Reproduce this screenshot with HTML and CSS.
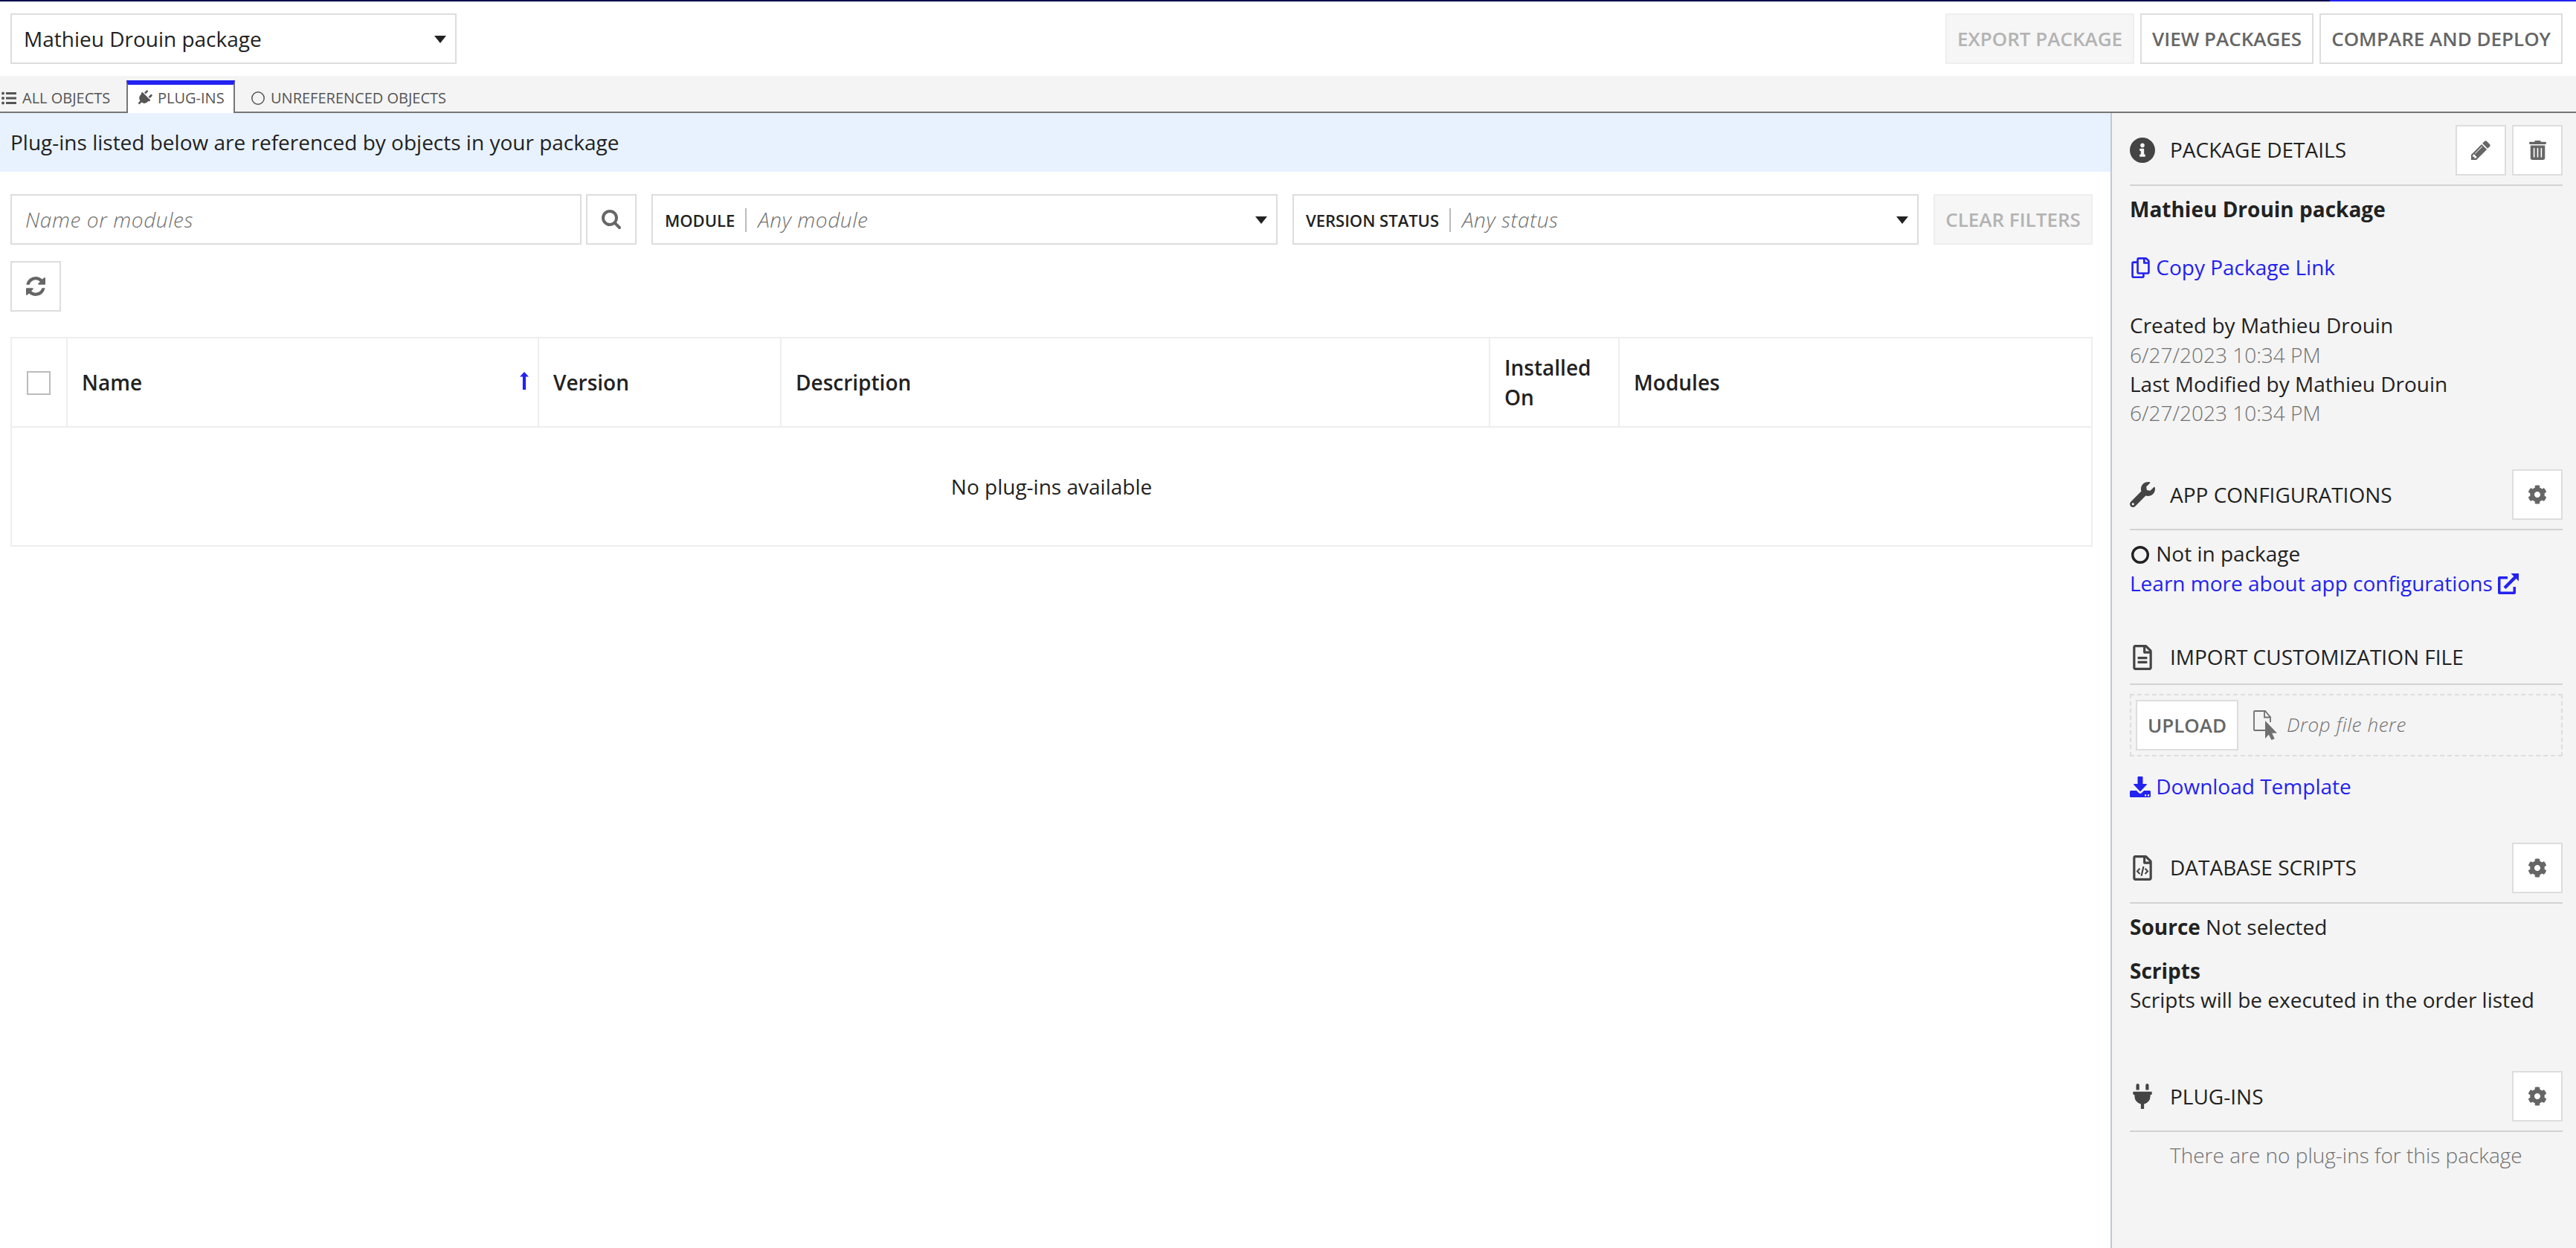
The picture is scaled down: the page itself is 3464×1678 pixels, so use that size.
FILE: index.html
```html
<!DOCTYPE html>
<html lang="en">
<head>
  <meta charset="UTF-8">
  <meta name="viewport" content="width=device-width, initial-scale=1.0">
  <title>Mathieu Drouin package</title>
  <link rel="stylesheet" href="styles.css">
</head>
<body>
  <svg class="sprite" aria-hidden="true">
    <symbol id="cog" viewBox="0 0 512 512"><path d="M487.4 315.7l-42.6-24.6c4.3-23.2 4.3-47 0-70.2l42.6-24.6c4.9-2.8 7.1-8.6 5.5-14-11.1-35.6-30-67.8-54.7-94.6-3.8-4.1-10-5.1-14.8-2.3L380.8 110c-17.900-15.400-38.500-27.300-60.800-35.100V25.800c0-5.600-3.900-10.500-9.400-11.700-36.700-8.200-74.300-7.800-109.200 0-5.500 1.200-9.400 6.100-9.400 11.700V75c-22.200 7.900-42.800 19.800-60.800 35.100L88.700 85.500c-4.900-2.800-11-1.900-14.800 2.300-24.700 26.700-43.600 58.900-54.700 94.600-1.700 5.400.6 11.200 5.500 14L67.300 221c-4.300 23.200-4.300 47 0 70.200l-42.600 24.600c-4.900 2.800-7.100 8.600-5.500 14 11.100 35.600 30 67.800 54.700 94.600 3.800 4.100 10 5.100 14.800 2.300l42.600-24.600c17.900 15.400 38.500 27.300 60.800 35.100v49.200c0 5.600 3.900 10.500 9.400 11.700 36.700 8.200 74.300 7.800 109.200 0 5.500-1.200 9.400-6.100 9.400-11.700v-49.200c22.200-7.900 42.800-19.800 60.800-35.100l42.600 24.600c4.900 2.800 11 1.900 14.800-2.300 24.700-26.700 43.600-58.900 54.700-94.600 1.500-5.500-.7-11.300-5.600-14.100zM256 336c-44.100 0-80-35.900-80-80s35.900-80 80-80 80 35.900 80 80-35.900 80-80 80z"/></symbol>
    <symbol id="plug" viewBox="0 0 384 512"><path d="M320 32a32 32 0 0 0-64 0v96h64zm48 128H16a16 16 0 0 0-16 16v32a16 16 0 0 0 16 16h16v32a160.070 160.070 0 0 0 128 156.800V512h64v-99.200A160.070 160.070 0 0 0 352 256v-32h16a16 16 0 0 0 16-16v-32a16 16 0 0 0-16-16zM128 32a32 32 0 0 0-64 0v96h64z"/></symbol>
  </svg>

  <header class="topbar">
    <div class="select package-select">
      <span>Mathieu Drouin package</span>
      <span class="caret"></span>
    </div>
    <div class="actions">
      <button class="btn" disabled>EXPORT PACKAGE</button>
      <button class="btn">VIEW PACKAGES</button>
      <button class="btn">COMPARE AND DEPLOY</button>
    </div>
  </header>

  <nav class="tabs">
    <a class="tab tab-first">
      <svg width="20" height="18" viewBox="0 0 20 18"><circle cx="2" cy="2.500" r="2"/><circle cx="2" cy="9" r="2"/><circle cx="2" cy="15.500" r="2"/><path d="M6 1h14v3H6zM6 7.500h14v3H6zM6 14h14v3H6z"/></svg>
      ALL OBJECTS
    </a>
    <a class="tab active">
      <svg class="plug-tilt" width="16" height="22"><use href="#plug"/></svg>
      PLUG-INS
    </a>
    <a class="tab tab-last">
      <svg width="18" height="18" viewBox="0 0 18 18"><circle cx="9" cy="9" r="8.200" fill="none" stroke="currentColor" stroke-width="1.500"/></svg>
      UNREFERENCED OBJECTS
    </a>
  </nav>

  <div class="layout">
    <main class="main">
      <div class="banner">Plug-ins listed below are referenced by objects in your package</div>

      <div class="filters">
        <div class="search">
          <div class="search-input">Name or modules</div>
          <button class="btn btn-icon">
            <svg width="26" height="26" viewBox="64 128 1664 1664"><path d="M1216 832q0-185-131.500-316.500t-316.500-131.500-316.500 131.500-131.500 316.500 131.500 316.500 316.500 131.500 316.500-131.500 131.500-316.500zm512 832q0 52-38 90t-90 38q-54 0-90-38l-343-342q-179 124-399 124-143 0-273.500-55.500t-225-150-150-225-55.500-273.500 55.500-273.500 150-225 225-150 273.500-55.500 273.500 55.500 225 150 150 225 55.500 273.500q0 220-124 399l343 343q37 37 37 90z"/></svg>
          </button>
        </div>
        <div class="select filter">
          <span class="filter-label">MODULE</span>
          <span class="filter-value">Any module</span>
          <span class="caret"></span>
        </div>
        <div class="select filter">
          <span class="filter-label">VERSION STATUS</span>
          <span class="filter-value">Any status</span>
          <span class="caret"></span>
        </div>
        <button class="btn btn-clear" disabled>CLEAR FILTERS</button>
      </div>

      <button class="btn btn-icon btn-refresh">
        <svg width="26" height="26" viewBox="128 128 1536 1536"><path d="M1639 1056q0 5-1 7-64 268-268 434.500t-478 166.500q-146 0-282.500-55t-243.500-157l-129 129q-19 19-45 19t-45-19-19-45v-448q0-26 19-45t45-19h448q26 0 45 19t19 45-19 45l-137 137q71 66 161 102t187 36q134 0 250-65t186-179q11-17 53-117 8-23 30-23h192q13 0 22.500 9.500t9.500 22.500zm25-800v448q0 26-19 45t-45 19h-448q-26 0-45-19t-19-45 19-45l138-138q-148-137-349-137-134 0-250 65t-186 179q-11 17-53 117-8 23-30 23h-199q-13 0-22.500-9.500t-9.500-22.500v-7q65-268 270-434.500t480-166.500q146 0 284 55.500t245 156.500l130-129q19-19 45-19t45 19 19 45z"/></svg>
      </button>

      <table class="grid">
        <colgroup>
          <col class="col-check">
          <col class="col-name">
          <col class="col-version">
          <col class="col-description">
          <col class="col-installed">
          <col>
        </colgroup>
        <thead>
          <tr>
            <th><span class="checkbox"></span></th>
            <th>
              <div class="sortable">
                Name
                <svg width="12" height="24" viewBox="0 0 12 24"><path d="M6 0l6 6.500H8.100V24H3.900V6.500H0z"/></svg>
              </div>
            </th>
            <th>Version</th>
            <th>Description</th>
            <th>Installed On</th>
            <th>Modules</th>
          </tr>
        </thead>
        <tbody>
          <tr>
            <td colspan="6">No plug-ins available</td>
          </tr>
        </tbody>
      </table>
    </main>

    <aside class="sidebar">
      <section class="panel details">
        <div class="panel-head">
          <span class="panel-icon"><svg width="34" height="34" viewBox="8 8 496 496"><path d="M256 8C119.043 8 8 119.083 8 256c0 136.997 111.043 248 248 248s248-111.003 248-248C504 119.083 392.957 8 256 8zm0 110c23.196 0 42 18.804 42 42s-18.804 42-42 42-42-18.804-42-42 18.804-42 42-42zm56 254c0 6.627-5.373 12-12 12h-88c-6.627 0-12-5.373-12-12v-24c0-6.627 5.373-12 12-12h12v-64h-12c-6.627 0-12-5.373-12-12v-24c0-6.627 5.373-12 12-12h64c6.627 0 12 5.373 12 12v100h12c6.627 0 12 5.373 12 12v24z"/></svg></span>
          <h2>PACKAGE DETAILS</h2>
          <button class="btn btn-icon"><svg width="26" height="26" viewBox="128 128 1536 1536"><path d="M491 1536l91-91-235-235-91 91v107h128v128h107zm523-928q0-22-22-22-10 0-17 7l-542 542q-7 7-7 17 0 22 22 22 10 0 17-7l542-542q7-7 7-17zm-54-192l416 416-832 832h-416v-416zm683 96q0 53-37 90l-166 166-416-416 166-165q36-38 90-38 53 0 91 38l235 234q37 39 37 91z"/></svg></button>
          <button class="btn btn-icon"><svg width="23" height="26" viewBox="0 0 448 512"><path d="M32 464a48 48 0 0 0 48 48h288a48 48 0 0 0 48-48V128H32zm272-256a16 16 0 0 1 32 0v224a16 16 0 0 1-32 0zm-96 0a16 16 0 0 1 32 0v224a16 16 0 0 1-32 0zm-96 0a16 16 0 0 1 32 0v224a16 16 0 0 1-32 0zM432 32H312l-9.400-18.700A24 24 0 0 0 281.100 0H166.800a23.720 23.720 0 0 0-21.400 13.300L136 32H16A16 16 0 0 0 0 48v32a16 16 0 0 0 16 16h416a16 16 0 0 0 16-16V48a16 16 0 0 0-16-16z"/></svg></button>
        </div>
        <p><strong>Mathieu Drouin package</strong></p>
        <p class="copy-link">
          <a class="link">
            <svg class="icon" width="25" height="28" viewBox="0 0 448 512"><path d="M433.941 65.941l-51.882-51.882A48 48 0 0 0 348.118 0H176c-26.510 0-48 21.490-48 48v48H48c-26.510 0-48 21.490-48 48v320c0 26.510 21.490 48 48 48h224c26.510 0 48-21.490 48-48v-48h80c26.510 0 48-21.490 48-48V99.882a48 48 0 0 0-14.059-33.941zM266 464H54a6 6 0 0 1-6-6V150a6 6 0 0 1 6-6h74v224c0 26.510 21.490 48 48 48h96v42a6 6 0 0 1-6 6zm128-96H182a6 6 0 0 1-6-6V54a6 6 0 0 1 6-6h106v88c0 13.255 10.745 24 24 24h88v202a6 6 0 0 1-6 6zm6-256h-64V48h9.632c1.591 0 3.117.632 4.243 1.757l48.368 48.368a6 6 0 0 1 1.757 4.243V112z"/></svg>
            Copy Package Link
          </a>
        </p>
        <p>Created by Mathieu Drouin</p>
        <p class="muted">6/27/2023 10:34 PM</p>
        <p>Last Modified by Mathieu Drouin</p>
        <p class="muted">6/27/2023 10:34 PM</p>
      </section>

      <section class="panel">
        <div class="panel-head">
          <span class="panel-icon"><svg width="34" height="34" viewBox="0 0 512 512"><path d="M507.730 109.100c-2.240-9.030-13.540-12.090-20.120-5.510l-74.360 74.360-67.880-11.310-11.310-67.880 74.360-74.360c6.620-6.620 3.430-17.900-5.660-20.160-47.380-11.740-99.550.91-136.580 37.930-39.640 39.640-50.550 97.100-34.050 147.200L18.740 402.760c-24.990 24.990-24.990 65.510 0 90.500 24.990 24.990 65.510 24.990 90.500 0l213.210-213.210c50.120 16.710 107.470 5.680 147.370-34.220 37.070-37.070 49.700-89.320 37.910-136.730zM64 472c-13.250 0-24-10.750-24-24 0-13.260 10.750-24 24-24s24 10.740 24 24c0 13.250-10.750 24-24 24z"/></svg></span>
          <h2>APP CONFIGURATIONS</h2>
          <button class="btn btn-icon"><svg width="26" height="26"><use href="#cog"/></svg></button>
        </div>
        <p class="status">
          <svg class="icon" width="24" height="24" viewBox="0 0 24 24"><circle cx="12" cy="12" r="10.300" fill="none" stroke="currentColor" stroke-width="3.400"/></svg>
          Not in package
        </p>
        <p>
          <a class="link">Learn more about app configurations <svg width="28" height="28" viewBox="0 0 28 28"><path d="M2 4h11v3.500H3.500v17h17V18H24v8q0 2-2 2H2q-2 0-2-2V6q0-2 2-2z"/><path d="M17.500 0H28v10.500l-3.400-3.400L10.500 21 7.500 18 21.300 4z"/></svg></a>
        </p>
      </section>

      <section class="panel">
        <div class="panel-head">
          <span class="panel-icon"><svg width="26" height="34" viewBox="0 0 384 512"><path d="M369.900 97.900L286 14C277 5 264.800-.1 252.100-.1H48C21.500 0 0 21.500 0 48v416c0 26.500 21.500 48 48 48h288c26.500 0 48-21.500 48-48V131.900c0-12.700-5.100-25-14.100-34zM332.100 128H256V51.900l76.100 76.100zM48 464V48h160v104c0 13.300 10.700 24 24 24h104v288H48z"/><path d="M96 240h192v48H96zM96 328h192v48H96z"/></svg></span>
          <h2>IMPORT CUSTOMIZATION FILE</h2>
        </div>
        <div class="dropzone">
          <button class="btn btn-upload">UPLOAD</button>
          <svg width="32" height="40" viewBox="0 0 32 40"><path d="M16 27H2q-1 0-1-1V2q0-1 1-1h14l7 8v7M15 1v8.500h8" fill="none" stroke="currentColor" stroke-width="1.800"/><path d="M16 14v24l4.800-5.200 3.700 7.200 4.200-1.800-3.500-7.400H32z"/></svg>
          <span class="drop-text">Drop file here</span>
        </div>
        <p class="download">
          <a class="link">
            <svg class="icon" width="28" height="28" viewBox="0 0 28 28"><path d="M10.500 1q0-1 1-1h5q1 0 1 1v9H22q1.700 0 .6 1.300l-8 8.500q-.6.6-1.200 0l-8-8.500Q4.300 10 6 10h4.500z"/><path fill-rule="evenodd" d="M1.500 19H9l3 3q2 1.800 4 0l3-3h7.500q1.500 0 1.500 1.500v6q0 1.500-1.500 1.500h-25Q0 28 0 26.500v-6Q0 19 1.500 19zm18.500 5.300v2.200h2.200v-2.200zm4 0v2.200h2.200v-2.200z"/></svg>
            Download Template
          </a>
        </p>
      </section>

      <section class="panel scripts">
        <div class="panel-head">
          <span class="panel-icon"><svg width="26" height="34" viewBox="0 0 384 512"><path d="M369.900 97.900L286 14C277 5 264.800-.1 252.100-.1H48C21.500 0 0 21.500 0 48v416c0 26.500 21.500 48 48 48h288c26.500 0 48-21.500 48-48V131.900c0-12.700-5.100-25-14.100-34zM332.100 128H256V51.900l76.100 76.100zM48 464V48h160v104c0 13.300 10.700 24 24 24h104v288H48z"/><path d="M138 268l-50 54 50 54M246 268l50 54-50 54M214 226l-44 192" fill="none" stroke="currentColor" stroke-width="32"/></svg></span>
          <h2>DATABASE SCRIPTS</h2>
          <button class="btn btn-icon"><svg width="26" height="26"><use href="#cog"/></svg></button>
        </div>
        <p class="source"><strong>Source</strong> Not selected</p>
        <p><strong>Scripts</strong></p>
        <p>Scripts will be executed in the order listed</p>
      </section>

      <section class="panel plugins">
        <div class="panel-head">
          <span class="panel-icon"><svg width="26" height="34"><use href="#plug"/></svg></span>
          <h2>PLUG-INS</h2>
          <button class="btn btn-icon"><svg width="26" height="26"><use href="#cog"/></svg></button>
        </div>
        <p class="muted indent">There are no plug-ins for this package</p>
      </section>
    </aside>
  </div>
</body>
</html>
```

FILE: styles.css
```css
:root {
  --text: #222222;
  --muted: #707070;
  --accent: #2322f0;
  --border: #dddddd;
  --panel-bg: #f4f4f4;
  --tab-line: #767676;
}

* {
  box-sizing: border-box;
}

body {
  margin: 0;
  min-height: 1678px;
  display: flex;
  flex-direction: column;
  font-family: "Open Sans", "Noto Sans", sans-serif;
  font-size: 28px;
  line-height: 1.4;
  color: var(--text);
  background: #ffffff;
}

p,
h2 {
  margin: 0;
}

svg {
  fill: currentColor;
  flex-shrink: 0;
}

.sprite {
  display: none;
}

/* Buttons and selects */
.btn {
  display: flex;
  align-items: center;
  justify-content: center;
  flex-shrink: 0;
  height: 68px;
  padding: 0 14px;
  border: 2px solid var(--border);
  background: #ffffff;
  color: #666666;
  font-family: inherit;
  font-size: 26px;
  font-weight: 600;
  line-height: 36px;
  white-space: nowrap;
}

.btn:disabled {
  background: #f6f6f6;
  border-color: #eeeeee;
  color: #b3b3b3;
}

.btn-icon {
  width: 68px;
  padding: 0;
}

.select {
  display: flex;
  align-items: center;
  height: 68px;
  padding: 1px 12px 0 16px;
  border: 2px solid var(--border);
  background: #ffffff;
}

.caret {
  margin-left: auto;
  border: 8px solid transparent;
  border-top: 10px solid var(--text);
  border-bottom: 0;
}

/* Header */
.topbar {
  display: flex;
  justify-content: space-between;
  height: 102px;
  padding: 16px 18px 0 14px;
  border-top: 2px solid;
  border-image: linear-gradient(to right, #03034d 3131px, var(--accent) 3131px) 2;
}

.package-select {
  width: 600px;
}

.actions {
  display: flex;
  gap: 8px;
}

/* Tabs */
.tabs {
  display: flex;
  align-items: flex-end;
  height: 50px;
  background: linear-gradient(var(--tab-line), var(--tab-line)) bottom / 100% 2px no-repeat var(--panel-bg);
  font-size: 20px;
  color: #555555;
}

.tab {
  display: flex;
  align-items: center;
  gap: 8px;
  height: 44px;
}

.tab-first,
.tab-last {
  padding-top: 3px;
}

.tab-first {
  width: 170px;
  padding-left: 2px;
}

.tab-last {
  padding-left: 22px;
}

.tab.active {
  gap: 10px;
  width: 146px;
  padding: 0 0 2px 14px;
  border: 2px solid var(--tab-line);
  border-top: 6px solid var(--accent);
  border-bottom: 0;
  background: #ffffff;
}

.plug-tilt {
  transform: rotate(45deg);
}

/* Page columns */
.layout {
  display: flex;
  flex: 1;
}

.main {
  flex: 1;
}

.banner {
  height: 79px;
  padding: 20px 14px;
  background: #e8f2fe;
}

.filters {
  display: flex;
  gap: 20px;
  padding: 30px 24px 0 14px;
}

.search {
  display: flex;
  gap: 6px;
  width: 842px;
}

.search-input,
.filter-value,
.drop-text {
  color: var(--muted);
  font-weight: 300;
  font-style: italic;
  letter-spacing: 0.6px;
}

.search-input {
  flex: 1;
  height: 68px;
  padding: 13px 18px 0;
  border: 2px solid var(--border);
}

.filter {
  width: 842px;
}

.filter-label {
  padding-right: 14px;
  margin-right: 15px;
  border-right: 2px solid #bbbbbb;
  font-size: 22px;
  font-weight: 600;
  line-height: 32px;
}

.btn-clear {
  width: 214px;
}

.btn-refresh {
  margin: 22px 0 34px 14px;
}

/* Plug-in table */
.grid {
  width: 2800px;
  margin: 0 24px 0 14px;
  border-collapse: collapse;
  table-layout: fixed;
}

.grid th,
.grid td {
  border: 2px solid #eeeeee;
}

.grid th {
  height: 120px;
  padding: 1px 20px 0 19px;
  font-weight: 600;
  text-align: left;
}

.grid td {
  height: 160px;
  padding: 1px 0 0;
  text-align: center;
}

.col-check { width: 75px; }
.col-name { width: 634px; }
.col-version { width: 326px; }
.col-description { width: 953px; }
.col-installed { width: 174px; }

.checkbox {
  display: block;
  width: 32px;
  height: 32px;
  margin-left: 1px;
  border: 2px solid #bbbbbb;
}

.sortable {
  display: flex;
  justify-content: space-between;
  margin-right: -8px;
}

.sortable svg {
  margin-top: 5px;
  color: var(--accent);
}

/* Sidebar */
.sidebar {
  width: 626px;
  padding: 16px 18px 0 24px;
  border-left: 2px solid #c1c7d8;
  background: var(--panel-bg);
}

.panel {
  margin-bottom: 56px;
}

.panel.scripts {
  margin-bottom: 76px;
}

.panel-head {
  display: flex;
  align-items: center;
  gap: 8px;
  min-height: 60px;
  padding-bottom: 12px;
  margin-bottom: 12px;
  border-bottom: 2px solid #d2d2d2;
}

.panel-icon {
  display: flex;
  justify-content: center;
  width: 34px;
  margin-right: 12px;
  color: #444444;
}

.panel-head h2 {
  margin-right: auto;
  font-size: 28px;
  font-weight: 400;
}

.link {
  color: var(--accent);
}

.copy-link {
  margin: 39px 0;
}

.status {
  margin-bottom: 1px;
}

.status .icon,
.copy-link .icon {
  margin-left: 2px;
  margin-right: 1px;
}

.link svg,
.status svg {
  vertical-align: -4px;
}

.status .icon {
  margin-right: 2px;
  vertical-align: -3px;
}

.muted {
  color: var(--muted);
  font-weight: 300;
}

.dropzone {
  display: flex;
  align-items: center;
  height: 84px;
  padding: 0 6px;
  border: 2px dashed var(--border);
  color: var(--muted);
}

.btn-upload {
  width: 138px;
  margin-right: 20px;
}

.drop-text {
  margin-left: 13px;
  padding-bottom: 1px;
  font-size: 26px;
}

.download {
  margin-top: 21px;
}

.source {
  margin-bottom: 20px;
}

.indent {
  padding-left: 54px;
}
```
